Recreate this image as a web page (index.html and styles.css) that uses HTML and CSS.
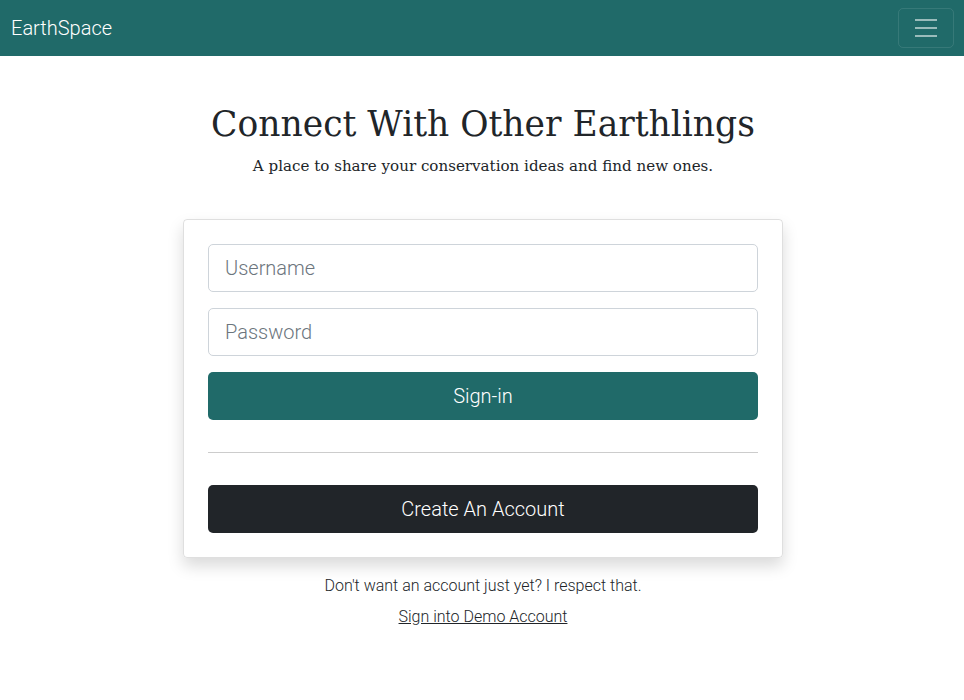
FILE: index.html
```html
<!DOCTYPE html>
<html lang="en">
<head>
<meta charset="utf-8">
<title>EarthSpace</title>
<link rel="stylesheet" href="styles.css">
</head>
<body>
<nav class="navbar">
  <a class="brand" href="#">EarthSpace</a>
  <button class="toggler" type="button" aria-label="Toggle navigation">
    <svg width="30" height="30" viewBox="0 0 30 30"><path d="M4 7h22M4 15h22M4 23h22" stroke="rgba(255,255,255,0.55)" stroke-width="2" stroke-linecap="butt"/></svg>
  </button>
</nav>
<main class="main">
  <header class="hero">
    <h1 class="title">Connect With Other Earthlings</h1>
    <p class="lead">A place to share your conservation ideas and find new ones.</p>
  </header>
  <section class="card">
    <input class="field" type="text" placeholder="Username">
    <input class="field" type="password" placeholder="Password">
    <button class="btn btn-teal" type="button">Sign-in</button>
    <hr class="rule">
    <button class="btn btn-dark" type="button">Create An Account</button>
  </section>
  <p class="note">Don't want an account just yet? I respect that.</p>
  <a class="demo" href="#">Sign into Demo Account</a>
</main>
</body>
</html>
```
FILE: styles.css
```css
* { box-sizing: border-box; }
body {
  margin: 0;
  font-family: Roboto, "Liberation Sans", sans-serif;
  font-weight: 300;
  color: #212529;
  background: #fff;
}
.navbar {
  height: 56px;
  background: #206a69;
  display: flex;
  align-items: center;
  justify-content: space-between;
  padding: 0 10px 0 11px;
}
.brand {
  color: #fff;
  font-size: 20px;
  font-weight: 300;
  text-decoration: none;
}
.toggler {
  width: 56px;
  height: 40px;
  background: transparent;
  border: 1px solid rgba(255,255,255,0.1);
  border-radius: 5px;
  display: flex;
  align-items: center;
  justify-content: center;
  padding: 0;
}
.main {
  display: flex;
  flex-direction: column;
  align-items: center;
  padding-left: 2px;
}
.hero {
  text-align: center;
  padding-top: 44px;
}
.title {
  font-family: "DejaVu Serif", serif;
  font-weight: 400;
  font-size: 34.5px;
  line-height: 48px;
  margin: 0;
  color: #212529;
}
.lead {
  font-family: "DejaVu Serif", serif;
  font-size: 15.1px;
  margin: 6px 0 0;
  line-height: 24px;
}
.card {
  width: 600px;
  margin-top: 41px;
  padding: 24px;
  border: 1px solid rgba(0,0,0,0.125);
  border-radius: 4px;
  box-shadow: 0 8px 16px rgba(0,0,0,0.15);
  display: flex;
  flex-direction: column;
}
.field {
  height: 48px;
  border: 1px solid #ced4da;
  border-radius: 5px;
  padding: 8px 16px;
  font-family: Roboto, sans-serif;
  font-weight: 300;
  font-size: 20px;
  color: #495057;
  margin-bottom: 16px;
}
.field::placeholder { color: #6c757d; }
.btn {
  height: 48px;
  border: none;
  border-radius: 5px;
  font-family: Roboto, sans-serif;
  font-weight: 300;
  font-size: 20px;
  color: #fff;
}
.btn-teal { background: #206a69; }
.btn-dark { background: #212529; }
.rule {
  width: 100%;
  margin: 32px 0;
  border: 0;
  border-top: 1px solid rgba(0,0,0,0.2);
}
.note {
  margin: 16px 0 0;
  font-size: 16px;
  line-height: 24px;
}
.demo {
  margin-top: 7px;
  font-size: 16px;
  line-height: 24px;
  color: #212529;
}
```
